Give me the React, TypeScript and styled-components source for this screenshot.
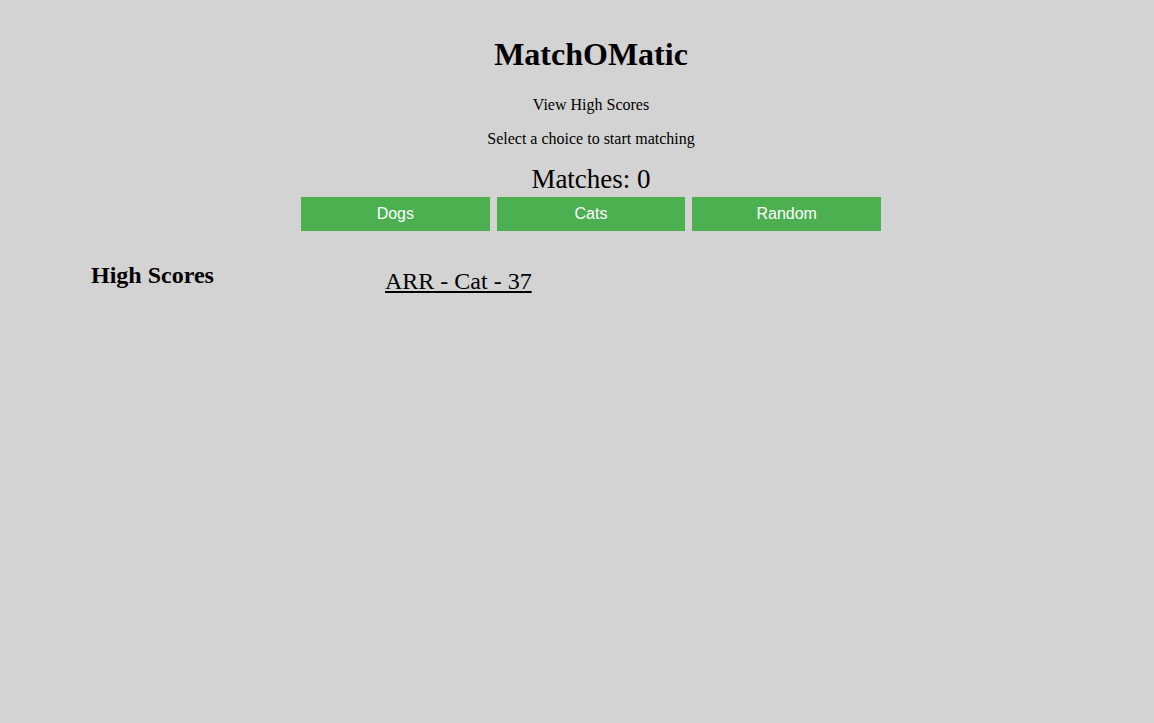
import React from "react";
import styled, { createGlobalStyle } from "styled-components";

const Global = createGlobalStyle`
  html, body {
    margin: 0;
    padding: 0;
    background: #d3d3d3;
    font-family: "Liberation Serif", "Times New Roman", serif;
    color: #000;
  }
`;

const Page = styled.div`
  min-height: 723px;
  box-sizing: border-box;
  padding-top: 36px;
`;

const Header = styled.header`
  display: flex;
  flex-direction: column;
  align-items: center;
  padding-left: 28px;
`;

const Title = styled.h1`
  margin: 0;
  font-size: 32px;
  line-height: 37px;
  font-weight: bold;
`;

const Line = styled.p<{ $gap: number }>`
  margin: ${(p) => p.$gap}px 0 0;
  font-size: 16px;
  line-height: 18px;
`;

const Matches = styled.div`
  margin-top: 16px;
  font-size: 27px;
  line-height: 31px;
`;

const Buttons = styled.div`
  display: flex;
  gap: 7px;
  width: 580px;
  margin-top: 2px;
`;

const Choice = styled.button`
  flex: 1;
  height: 34px;
  border: none;
  background: #4caf50;
  color: #fff;
  font-family: "Liberation Sans", Arial, sans-serif;
  font-size: 16px;
  padding: 0;
  cursor: pointer;
`;

const Scores = styled.section`
  display: flex;
  align-items: flex-start;
  margin-top: 30px;
  padding-left: 91px;
`;

const ScoresTitle = styled.h2`
  margin: 0;
  width: 294px;
  font-size: 24px;
  line-height: 28px;
  font-weight: bold;
`;

const ScoreList = styled.ul`
  margin: 6px 0 0;
  padding: 0;
  list-style: none;
`;

const ScoreItem = styled.li`
  font-size: 24px;
  line-height: 28px;
  text-decoration: underline;
`;

export default function App() {
  return (
    <>
      <Global />
      <Page>
        <Header>
          <Title>MatchOMatic</Title>
          <Line $gap={23}>View High Scores</Line>
          <Line $gap={16}>Select a choice to start matching</Line>
          <Matches>Matches: 0</Matches>
          <Buttons>
            <Choice>Dogs</Choice>
            <Choice>Cats</Choice>
            <Choice>Random</Choice>
          </Buttons>
        </Header>
        <Scores>
          <ScoresTitle>High Scores</ScoresTitle>
          <ScoreList>
            <ScoreItem>ARR - Cat - 37</ScoreItem>
          </ScoreList>
        </Scores>
      </Page>
    </>
  );
}
